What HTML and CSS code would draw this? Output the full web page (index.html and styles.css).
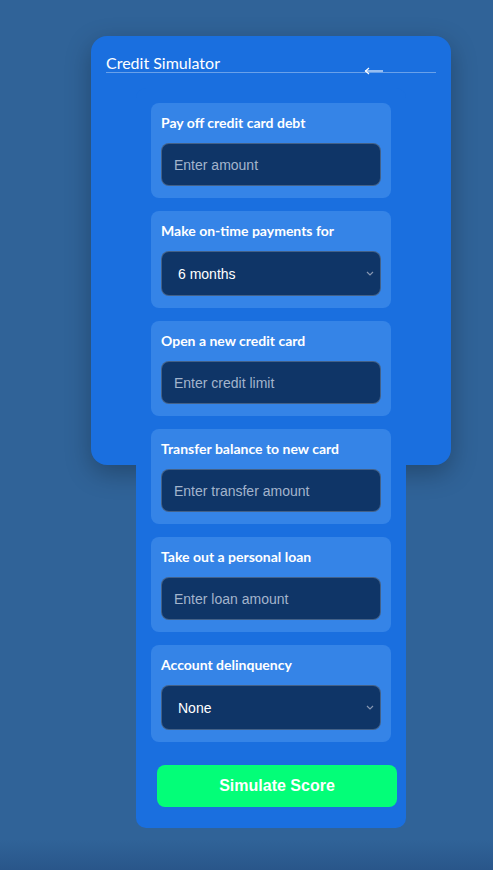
FILE: index.html
```html
<!DOCTYPE html>
<html lang="en">
<head>
<meta charset="utf-8">
<title>Credit Simulator</title>
<link rel="stylesheet" href="styles.css">
</head>
<body>
<div class="card">
  <div class="header">
    <h2 class="title">Credit Simulator</h2>
    <button class="back" aria-label="Back">
      <svg width="20" height="8" viewBox="0 0 20 8"><path d="M1 4H19" stroke="#fff" stroke-width="1.1"/><path d="M5 1L1.5 4L5 7" stroke="#fff" stroke-width="1.2" fill="none"/></svg>
    </button>
  </div>
  <div class="panel">
    <div class="section">
      <label class="label">Pay off credit card debt</label>
      <input class="field" type="text" placeholder="Enter amount">
    </div>
    <div class="section">
      <label class="label">Make on-time payments for</label>
      <select class="field select"><option>6 months</option></select>
    </div>
    <div class="section">
      <label class="label">Open a new credit card</label>
      <input class="field" type="text" placeholder="Enter credit limit">
    </div>
    <div class="section">
      <label class="label">Transfer balance to new card</label>
      <input class="field" type="text" placeholder="Enter transfer amount">
    </div>
    <div class="section">
      <label class="label">Take out a personal loan</label>
      <input class="field" type="text" placeholder="Enter loan amount">
    </div>
    <div class="section">
      <label class="label">Account delinquency</label>
      <select class="field select"><option>None</option></select>
    </div>
    <button class="simulate">Simulate Score</button>
  </div>
</div>
</body>
</html>
```
FILE: styles.css
```css
* { box-sizing: border-box; }
html, body { margin: 0; height: 870px; }
body {
  background: linear-gradient(to bottom, #306398 0, #306398 840px, #29568a 870px);
  padding: 36px 0 0 91px;
  font-family: Lato, "Liberation Sans", sans-serif;
  overflow: hidden;
}
.card {
  position: relative;
  width: 360px;
  height: 429px;
  padding: 15px;
  background: #1a6fdf;
  border-radius: 16px;
  box-shadow: 0 8px 26px rgba(0, 0, 0, 0.28);
}
.header {
  height: 22px;
  border-bottom: 1px solid rgba(255, 255, 255, 0.35);
}
.title {
  margin: 0;
  font-family: Lato, sans-serif;
  font-weight: 400;
  font-size: 16px;
  line-height: 23px;
  color: #fff;
}
.back {
  position: absolute;
  left: 273px;
  top: 31px;
  padding: 0;
  border: 0;
  background: none;
  line-height: 0;
}
.panel {
  width: 270px;
  margin: 15px auto 0;
  padding: 15px 15px 15px;
  background: #1a6fdf;
  border-radius: 10px;
}
.section {
  background: #3584e7;
  border-radius: 8px;
  padding: 10px 10px 12px;
  margin-bottom: 13px;
}
.label {
  display: block;
  color: #fff;
  font-family: Lato, sans-serif;
  font-weight: 700;
  font-size: 14px;
  line-height: 20px;
  margin-bottom: 10px;
}
.field {
  display: block;
  width: 100%;
  height: 43px;
  margin: 0;
  padding: 0 12px;
  background: #0f3567;
  border: 1px solid rgba(255, 255, 255, 0.22);
  border-radius: 8px;
  color: #fff;
  font-family: "Liberation Sans", Arial, sans-serif;
  font-size: 14px;
  outline: none;
}
.field::placeholder { color: #a3b4cc; }
.select {
  height: 45px;
  padding-left: 16px;
  appearance: none;
  -webkit-appearance: none;
  background: #0f3567 url("data:image/svg+xml,%3Csvg xmlns='http://www.w3.org/2000/svg' width='8' height='5' viewBox='0 0 8 5'%3E%3Cpath d='M1 1L4 4L7 1' stroke='%238796b0' stroke-width='1.2' fill='none'/%3E%3C/svg%3E") no-repeat right 6px center;
  font-weight: 400;
}
.simulate {
  display: block;
  width: 240px;
  height: 42px;
  margin: 23px 0 6px 6px;
  border: 0;
  border-radius: 8px;
  background: #03fe78;
  color: #fff;
  font-family: "Liberation Sans", Arial, sans-serif;
  font-weight: 700;
  font-size: 16px;
}
```
